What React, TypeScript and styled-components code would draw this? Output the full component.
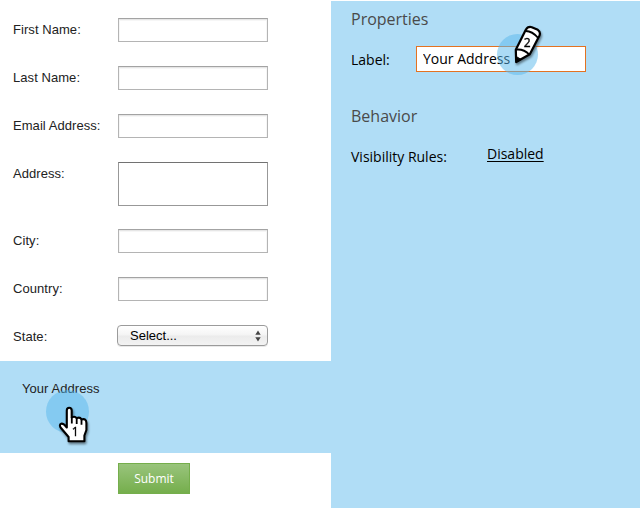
import React from "react";
import styled, { createGlobalStyle } from "styled-components";

const Global = createGlobalStyle`
  * { box-sizing: border-box; }
  body { margin: 0; background: #fff; }
`;

const sans = `"Liberation Sans", Arial, sans-serif`;
const humanist = `"Open Sans", "Noto Sans", sans-serif`;

const Page = styled.div`
  display: grid;
  grid-template-columns: 331px 309px;
  width: 641px;
  height: 508px;
  overflow: hidden;
`;

const Form = styled.form`
  display: flex;
  flex-direction: column;
  padding-top: 18px;
  font: 13px/16px ${sans};
  letter-spacing: 0.06px;
  color: #222;
`;

const Row = styled.div<{ $height?: number }>`
  display: grid;
  grid-template-columns: 105px 150px;
  align-items: start;
  flex: none;
  height: ${(p) => p.$height ?? 48}px;
  padding-left: 13px;
`;

const FieldLabel = styled.label`
  padding-top: 4px;
  white-space: nowrap;
`;

const TextField = styled.input`
  width: 150px;
  height: 24px;
  padding: 0 4px;
  border: 1px solid #b4b4b4;
  border-top-color: #a3a3a3;
  border-radius: 0;
  outline: none;
  background: #fff;
  box-shadow: inset 0 1px 0 #e6e6e6, inset 0 2px 0 #f6f6f6, inset 1px 0 0 #f6f6f6, inset -1px 0 0 #f6f6f6;
`;

const TextBox = styled.textarea`
  width: 150px;
  height: 44px;
  border: 1px solid #989898;
  border-top-color: #727272;
  border-radius: 0;
  outline: none;
  resize: none;
`;

const SelectBox = styled.div`
  display: flex;
  align-items: center;
  justify-content: space-between;
  width: 151px;
  height: 21px;
  margin-left: -1px;
  padding: 0 6px 0 12px;
  border: 1px solid #9b9b9b;
  border-radius: 4px;
  background: linear-gradient(#fff, #f4f4f4 48%, #ebebeb 52%, #f3f3f3);
  box-shadow: 0 1px 0 #e9e9e9;
  color: #000;
  letter-spacing: 0;
`;

const SelectedField = styled.div`
  position: relative;
  flex: none;
  height: 92px;
  padding: 20px 0 0 22px;
  background: #b0ddf6;
`;

const Actions = styled.div`
  padding: 10px 0 0 118px;
`;

const SubmitButton = styled.button`
  display: block;
  width: 72px;
  height: 31px;
  padding: 0 0 1px;
  border: 1px solid #75ae4c;
  background: linear-gradient(#99c47c, #75ae4c);
  color: #fff;
  font: 12px ${humanist};
`;

const Panel = styled.section`
  height: 507px;
  margin-top: 1px;
  padding: 6px 0 0 20px;
  background: #b0ddf6;
  color: #000;
  font: 14px/20px ${humanist};
`;

const Heading = styled.h2`
  margin: 0;
  height: 24px;
  color: #4a4a4a;
  font: 16px/24px ${humanist};
`;

const LabelLine = styled.div`
  position: relative;
  display: flex;
  margin: 15px 0 32px;
  height: 26px;
`;

const LabelName = styled.label`
  width: 65px;
  padding-top: 4px;
`;

const LabelInput = styled.input`
  width: 170px;
  height: 26px;
  padding: 0 6px 2px;
  border: 1px solid #e37222;
  border-radius: 0;
  outline: none;
  background: #fff;
  color: #000;
  font: 14px ${humanist};
`;

const RuleLine = styled.div`
  display: flex;
  margin-top: 16px;
`;

const RuleName = styled.span`
  width: 136px;
  padding-top: 3px;
`;

const RuleLink = styled.a`
  text-decoration: underline;
  text-underline-offset: 2px;
`;

const Marker = styled.svg<{ $left: number; $top: number }>`
  position: absolute;
  left: ${(p) => p.$left}px;
  top: ${(p) => p.$top}px;
  width: 56px;
  height: 60px;
  overflow: visible;
  filter: drop-shadow(1px 2px 1px rgba(0, 0, 0, 0.45));
`;

const Halo = styled.span<{ $left: number; $top: number; $size: number }>`
  position: absolute;
  left: ${(p) => p.$left}px;
  top: ${(p) => p.$top}px;
  width: ${(p) => p.$size}px;
  height: ${(p) => p.$size}px;
  border-radius: 50%;
  background: rgba(88, 184, 236, 0.5);
`;

const MarkerText = styled.text`
  font: 12px ${humanist};
  letter-spacing: 0;
  text-anchor: middle;
  fill: #000;
  stroke: #000;
  stroke-width: 0.35px;
`;

const Arrows = () => (
  <svg width="6" height="12" viewBox="0 0 6 12" fill="#444">
    <path d="M3 .5 5.7 4.7H.3zM3 11.5.3 7.3h5.4z" />
  </svg>
);

const textRows = [
  { name: "First Name:", height: 48 },
  { name: "Last Name:", height: 48 },
  { name: "Email Address:", height: 48 },
  { name: "Address:", height: 67, multiline: true },
  { name: "City:", height: 48 },
  { name: "Country:", height: 48 },
];

export default function App() {
  return (
    <>
      <Global />
      <Page>
        <Form>
          {textRows.map((r) => (
            <Row key={r.name} $height={r.height}>
              <FieldLabel>{r.name}</FieldLabel>
              {r.multiline ? <TextBox /> : <TextField />}
            </Row>
          ))}
          <Row $height={36}>
            <FieldLabel>State:</FieldLabel>
            <SelectBox>
              Select...
              <Arrows />
            </SelectBox>
          </Row>
          <SelectedField>
            Your Address
            <Halo $left={46} $top={29} $size={43} />
            <Marker $left={54} $top={39} viewBox="0 0 56 60">
              <path
                d="M12.8 25V10.4Q12.8 7.7 15.2 7.7T17.7 10.4V17.4Q21 15.8 22.6 18.2 26 16.6 27.4 19.4 32.4 18 32.4 23V30L30.4 35.5V41.3H14.6V37L7.2 28.3Q4.6 24.8 7.2 23.7 9.5 23.2 12.8 27.5Z"
                fill="#fff"
                stroke="#000"
                strokeWidth="2.1"
                strokeLinejoin="round"
              />
              <path d="M17.8 17V23.5M22.7 18.2V24M27.5 19.6V24.8" stroke="#000" strokeWidth="1.8" />
              <MarkerText x="21.3" y="36">1</MarkerText>
            </Marker>
          </SelectedField>
          <Actions>
            <SubmitButton type="button">Submit</SubmitButton>
          </Actions>
        </Form>
        <Panel>
          <Heading>Properties</Heading>
          <LabelLine>
            <LabelName>Label:</LabelName>
            <LabelInput defaultValue="Your Address" />
            <Halo $left={146} $top={-12} $size={41} />
            <Marker $left={157} $top={-26} viewBox="0 0 56 60">
              <path
                d="M7.8 29.8 17.8 9.8Q19.8 6.2 23.8 7.2L29.8 9.8Q33 12 31.4 15.8L21.8 34.3 8.2 42Z"
                fill="#fff"
                stroke="#000"
                strokeWidth="2.2"
                strokeLinejoin="round"
              />
              <path d="M17.5 11Q24 10.8 30.2 18M8 29.6Q15.5 28.6 21.4 34.6" fill="none" stroke="#000" strokeWidth="1.9" />
              <path d="M8 36.4 13.2 39.4 8 42.5Z" stroke="#000" />
              <MarkerText x="19.2" y="27.2">2</MarkerText>
            </Marker>
          </LabelLine>
          <Heading>Behavior</Heading>
          <RuleLine>
            <RuleName>Visibility Rules:</RuleName>
            <RuleLink>Disabled</RuleLink>
          </RuleLine>
        </Panel>
      </Page>
    </>
  );
}
